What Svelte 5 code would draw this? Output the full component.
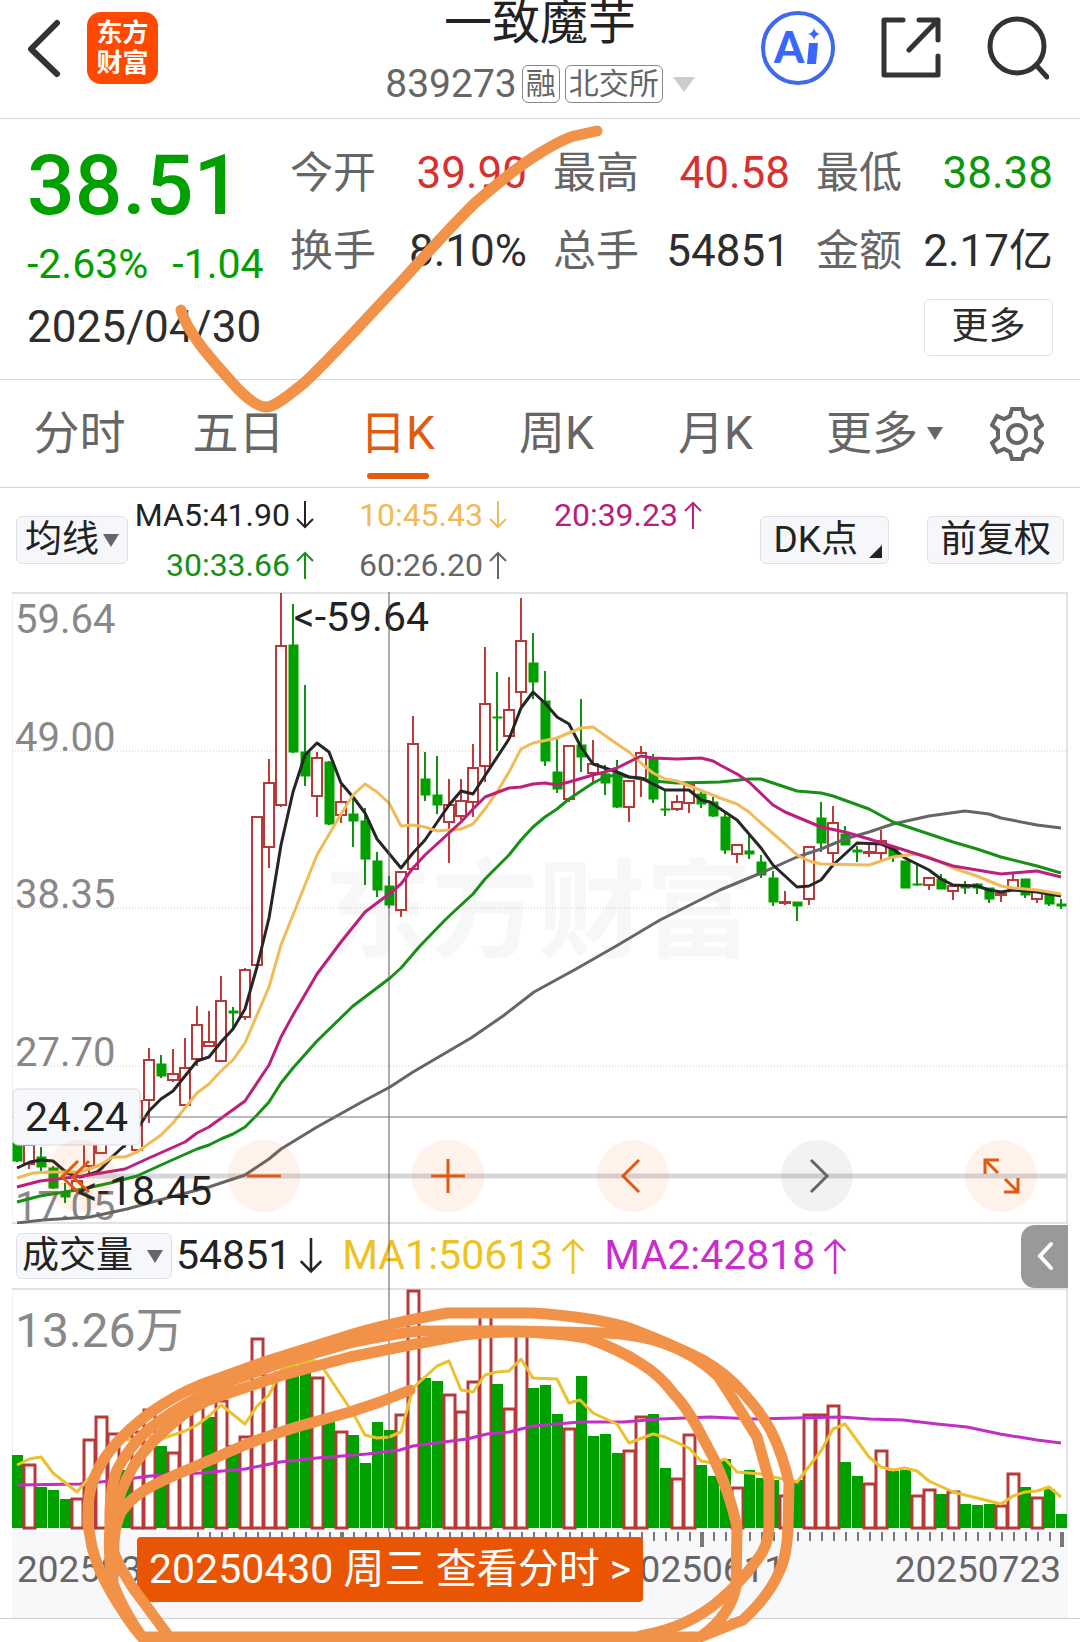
<script>
  // [rising, high, bodyTop, bodyBottom, low] in plot units
  const candles = [
    [0, 1135, 1143, 1161, 1162], [1, 1144, 1145, 1164, 1169], [0, 1147, 1157, 1167, 1171], [0, 1166, 1168, 1188, 1189],
    [0, 1183, 1192, 1197, 1203], [1, 1181, 1181, 1191, 1193], [1, 1130, 1140, 1166, 1173], [1, 1130, 1135, 1153, 1153],
    [1, 1120, 1125, 1140, 1142], [0, 1120, 1125, 1143, 1148], [1, 1100, 1101, 1150, 1150], [1, 1048, 1060, 1100, 1123],
    [0, 1055, 1064, 1076, 1078], [1, 1049, 1074, 1080, 1082], [1, 1038, 1068, 1105, 1105], [1, 1006, 1025, 1059, 1066],
    [1, 1011, 1042, 1046, 1046], [1, 976, 1001, 1061, 1061], [0, 1007, 1011, 1013, 1028], [1, 968, 970, 1017, 1020],
    [1, 817, 817, 965, 965], [1, 759, 783, 847, 868], [1, 593, 646, 805, 807], [0, 604, 645, 752, 753],
    [0, 685, 752, 776, 786], [1, 752, 758, 796, 817], [0, 761, 762, 824, 825], [1, 785, 802, 815, 823],
    [0, 798, 814, 821, 847], [0, 808, 821, 859, 885], [0, 852, 861, 890, 897], [0, 876, 886, 905, 908],
    [1, 872, 872, 910, 917], [1, 716, 744, 869, 869], [0, 752, 779, 795, 801], [0, 756, 795, 805, 814],
    [1, 779, 805, 822, 863], [1, 779, 801, 816, 820], [1, 744, 768, 802, 817], [1, 647, 704, 766, 782],
    [0, 672, 717, 718, 751], [1, 677, 710, 736, 736], [1, 598, 641, 692, 706], [0, 633, 663, 682, 699],
    [0, 671, 701, 761, 766], [0, 737, 772, 789, 793], [1, 746, 746, 799, 802], [0, 699, 745, 757, 772],
    [1, 740, 764, 773, 782], [0, 765, 774, 783, 795], [0, 760, 773, 807, 808], [1, 781, 781, 807, 822],
    [1, 746, 753, 778, 797], [0, 754, 758, 799, 803], [0, 790, 809, 810, 816], [1, 795, 802, 809, 811],
    [1, 784, 785, 803, 813], [0, 790, 794, 804, 808], [0, 797, 802, 816, 817], [0, 812, 817, 850, 854],
    [1, 845, 845, 854, 863], [0, 835, 851, 854, 859], [0, 855, 862, 875, 878], [0, 871, 878, 902, 906],
    [1, 891, 902, 903, 905], [0, 902, 902, 906, 921], [1, 847, 847, 899, 905], [0, 802, 818, 843, 852],
    [1, 806, 823, 853, 863], [0, 826, 834, 845, 845], [0, 846, 850, 852, 862], [1, 842, 852, 853, 857],
    [1, 830, 841, 853, 860], [0, 847, 849, 857, 862], [0, 861, 861, 888, 888], [0, 865, 884, 885, 886],
    [1, 878, 878, 885, 890], [0, 874, 879, 889, 889], [1, 886, 886, 891, 900], [0, 881, 885, 888, 894],
    [0, 883, 884, 888, 894], [0, 888, 888, 899, 903], [1, 894, 894, 895, 902], [1, 873, 880, 888, 888],
    [0, 879, 879, 895, 898], [1, 892, 892, 899, 903], [0, 895, 895, 904, 906], [0, 899, 904, 906, 909]
  ];

  // Bar tops; a negative value is a falling day
  const volumes = [
    -1455, 1464, -1487, -1490, -1499, 1498, 1439, 1416, 1433, -1470, 1431, 1409, -1446, 1452, 1410, 1403, -1417, 1400,
    -1445, 1436, 1338, 1375, 1372, -1366, -1364, 1377, -1422, 1431, -1435, -1463, -1422, -1430, 1414, 1290, -1378, -1381,
    1394, 1411, 1381, 1313, -1384, 1408, 1330, -1388, -1385, -1414, 1428, -1376, -1436, -1434, -1453, 1450, 1416, -1414,
    -1468, 1478, 1434, -1465, -1476, -1459, 1487, -1470, -1478, -1480, 1495, -1480, 1414, 1414, 1405, -1462, -1476, 1483,
    1450, -1471, -1470, 1495, 1489, -1494, 1491, -1504, -1505, -1504, 1505, 1473, -1487, 1497, -1489, -1514
  ];

  const averages = [
    { name: 'ma60', points: '17,1223 43,1220 90,1217 127,1209 167,1198 209,1187 245,1175 269,1159 281,1149 317,1127 360,1103 390,1087 413,1072 471,1038 503,1016 534,992 576,969 618,945 660,920 720,890 761,873 797,857 821,849 845,839 869,832 893,824 929,816 965,811 989,814 1001,818 1037,825 1061,828' },
    { name: 'ma30', points: '17,1202 40,1196 83,1189 110,1183 137,1176 161,1165 197,1149 209,1145 221,1139 233,1134 245,1127 257,1115 269,1102 281,1083 293,1068 317,1041 353,1006 365,997 390,978 401,968 419,947 445,920 461,905 473,894 485,879 509,855 521,840 533,827 545,817 557,809 569,799 593,783 605,777 617,775 629,777 653,781 677,783 720,782 749,779 761,779 773,783 797,791 821,793 833,796 869,809 893,822 917,830 953,842 977,849 1001,857 1037,866 1061,873' },
    { name: 'ma5', points: '17,1168 30,1162 41,1160 53,1161 67,1173 80,1177 97,1172 102,1168 113,1156 125,1145 142,1122 149,1111 161,1099 173,1091 197,1061 209,1057 221,1042 233,1029 245,1009 257,967 269,918 281,845 293,792 305,755 317,743 329,752 341,783 353,797 365,813 377,839 401,868 413,853 425,840 449,805 461,791 473,794 509,739 521,708 533,692 545,703 557,717 569,724 581,747 593,764 617,772 629,777 641,778 665,790 689,790 701,800 710,802 737,820 761,848 773,865 797,887 809,886 821,880 833,865 857,843 881,844 893,849 905,858 929,870 941,879 953,885 977,886 989,890 1001,892 1013,890 1037,892 1061,896' },
    { name: 'ma10', points: '17,1178 33,1173 53,1172 80,1172 100,1165 113,1157 125,1157 137,1152 161,1135 173,1123 197,1093 209,1084 221,1071 233,1060 245,1043 269,987 281,945 291,920 317,855 341,814 353,795 365,784 377,792 389,803 401,826 413,825 425,827 437,831 461,829 473,824 485,809 497,792 509,772 521,749 533,743 557,738 581,728 593,727 617,744 629,752 641,763 653,773 665,779 677,781 720,798 737,804 749,812 761,823 785,844 797,855 809,861 821,864 869,865 893,857 917,854 929,857 953,868 977,876 1001,886 1013,888 1037,890 1061,894' },
    { name: 'ma20', points: '17,1187 40,1181 83,1176 125,1169 149,1158 185,1142 197,1133 209,1127 245,1101 269,1065 281,1037 293,1015 317,974 341,942 365,912 377,903 389,894 401,884 413,868 425,855 461,822 473,809 485,797 509,788 521,787 533,784 545,783 557,785 569,782 593,775 605,772 617,768 641,756 653,758 677,759 701,758 713,761 720,765 737,774 749,782 773,805 785,812 809,822 821,827 845,832 869,839 917,854 953,866 989,872 1001,874 1037,871 1061,877' }
  ];

  const volumeAverages = [
    { name: 'vol2', points: '17,1485 80,1484 120,1480 150,1476 200,1473 245,1469 280,1462 317,1458 367,1454 400,1450 413,1446 467,1439 487,1434 509,1432 533,1426 580,1422 623,1422 660,1419 710,1417 753,1419 840,1417 870,1419 903,1420 937,1424 967,1427 1000,1434 1037,1440 1061,1443' },
    { name: 'vol1', points: '17,1465 29,1459 41,1457 53,1473 77,1492 89,1478 113,1443 125,1440 137,1439 149,1436 161,1439 185,1431 197,1425 209,1416 221,1405 245,1424 257,1406 269,1395 281,1370 293,1365 313,1360 323,1368 353,1413 365,1435 377,1438 389,1437 401,1432 413,1388 437,1366 449,1361 461,1390 473,1392 485,1375 497,1372 509,1371 521,1359 533,1378 557,1379 569,1403 580,1400 593,1413 617,1424 629,1443 653,1434 665,1437 689,1448 701,1461 713,1463 725,1459 737,1472 761,1474 773,1477 797,1482 821,1451 833,1429 845,1424 869,1457 881,1467 893,1470 905,1468 917,1471 929,1481 953,1492 977,1498 1001,1504 1013,1496 1025,1492 1037,1491 1049,1487 1061,1497' }
  ];

  const stats = [
    ['今开', '39.90', 'up'], ['最高', '40.58', 'up'], ['最低', '38.38', 'down'],
    ['换手', '8.10%', ''], ['总手', '54851', ''], ['金额', '2.17亿', '']
  ];
  const legend = [
    ['MA5:41.90', 'down', 'c5'], ['10:45.43', 'down', 'c10'], ['20:39.23', 'up', 'c20'],
    ['30:33.66', 'up', 'c30'], ['60:26.20', 'up', 'c60']
  ];
  const tabs = ['分时', '五日', '日K', '周K', '月K'];
  const priceLabels = [['59.64', 633], ['49.00', 751], ['38.35', 908], ['27.70', 1066], ['17.05', 1220]];
  const tools = [
    { label: '向前翻页', d: 'M34 21 18 37l16 15M45 21 29 37l16 15' },
    { label: '缩小', d: 'M19 36h34' },
    { label: '放大', d: 'M19 36h34M36 19v34' },
    { label: '左移', d: 'M42 20 26 36l16 16' },
    { label: '右移', d: 'M30 20l16 16-16 16', off: true },
    { label: '全屏', d: 'M20 34V20h14M20 20l13 13M53 38v14H39M53 52 40 39' }
  ];
  const at = (i) => 17 + 12 * i;
  const ticks = candles.map((_, i) => i).filter((i) => i > 14);
  let active = $state('日K');
</script>

{#snippet arrow(dir)}
  <svg class="arrow" viewBox="0 0 18 28" aria-hidden="true">
    <path d={dir === 'up' ? 'M9 28V2M1 10l8-8 8 8' : 'M9 0v26M1 18l8 8 8-8'} />
  </svg>
{/snippet}

{#snippet caret()}
  <svg width="16" height="13" viewBox="0 0 16 13" aria-hidden="true"><path d="M0 0h16L8 13z" fill="#666" /></svg>
{/snippet}

<div class="page">
  <header>
    <div class="side">
      <button class="icon" aria-label="返回">
        <svg width="36" height="60" viewBox="0 0 36 60"><path d="M31 5 5 31l26 25" fill="none" stroke="#333" stroke-width="6" stroke-linecap="round" stroke-linejoin="round" /></svg>
      </button>
      <div class="logo"><span>东方</span><span>财富</span></div>
    </div>
    <div class="name">
      <h1>一致魔芋</h1>
      <div class="code">
        <span>839273</span><span class="tag">融</span><span class="tag">北交所</span>
        <svg width="22" height="15" viewBox="0 0 22 15" aria-hidden="true"><path d="M0 0h22L11 15z" fill="#ccc" /></svg>
      </div>
    </div>
    <div class="side right">
      <button class="icon" aria-label="Ai">
        <svg width="74" height="76" viewBox="0 0 74 76">
          <circle cx="37" cy="38" r="35" fill="none" stroke="#3f69ec" stroke-width="4" />
          <text class="ai" x="13" y="53">A</text>
          <path d="M48 33h9l-2 21h-9z" fill="#3a66ff" />
          <path d="M53 18q1 5 6 6-5 1-6 6-1-5-6-6 5-1 6-6z" fill="#3a66ff" />
        </svg>
      </button>
      <button class="icon" aria-label="分享">
        <svg width="60" height="62" viewBox="0 0 60 62" fill="none" stroke="#333" stroke-width="5" stroke-linecap="round" stroke-linejoin="round"><path d="M22 3H3v55h54V39M38 3h19v20M57 3 28 33" /></svg>
      </button>
      <button class="icon" aria-label="搜索">
        <svg width="62" height="64" viewBox="0 0 62 64" fill="none" stroke="#333" stroke-width="5" stroke-linecap="round"><circle cx="30" cy="30" r="27" /><path d="m49 49 11 12" /></svg>
      </button>
    </div>
  </header>

  <section class="quote">
    <div class="top">
      <div class="price">
        <strong>38.51</strong>
        <div class="change"><span>-2.63%</span><span>-1.04</span></div>
      </div>
      <dl>
        {#each stats as [label, value, tone]}
          <div><dt>{label}</dt><dd class={tone}>{value}</dd></div>
        {/each}
      </dl>
    </div>
    <div class="bottom">
      <time datetime="2025-04-30">2025/04/30</time>
      <button class="more">更多</button>
    </div>
  </section>

  <nav>
    {#each tabs as tab}
      <button class:active={active === tab} onclick={() => (active = tab)}>{tab}</button>
    {/each}
    <button class="wide">更多{@render caret()}</button>
    <button aria-label="设置">
      <svg width="54" height="56" viewBox="-27 -28 54 56" fill="none" stroke="#666" stroke-width="4">
        <path d="M-5-25H5L7-18 13-15 20-18 25-9 19-4V4L25 9 20 18 13 15 7 18 5 25H-5L-7 18-13 15-20 18-25 9-19 4V-4L-25-9-20-18-13-15-7-18z" />
        <circle r="9" />
      </svg>
    </button>
  </nav>

  <div class="averages">
    <button class="chip ma">均线{@render caret()}</button>
    <div class="legend">
      {#each legend as [text, dir, tone]}
        <span class={tone}>{text}{@render arrow(dir)}</span>
      {/each}
    </div>
    <button class="chip dk">DK点<svg width="13" height="13" viewBox="0 0 13 13" aria-hidden="true"><path d="M13 0v13H0z" fill="#222" /></svg></button>
    <button class="chip">前复权</button>
  </div>

  <div class="charts">
    <div class="kline">
      <svg class="plot" viewBox="12 592 1056 632" role="img" aria-label="日K线图">
        <text class="watermark" x="324" y="949">东方财富</text>
        <path class="grid" d="M12 751H1066M12 908H1066M12 1066H1066" />
        <path class="frame" d="M12 593H1067V1223H12" /><path class="frame thin" d="M12 593V1223" />
        {#each priceLabels as [text, y]}<text class="scale" x="15" {y}>{text}</text>{/each}
        <path d="M60 1176H1067" stroke="#d5d7dd" stroke-width="5" />
        {#each candles as [rising, high, top, bottom, low], i}
          <g class={rising ? 'rise' : 'fall'}>
            {#if rising}
              <path d="M{at(i)} {high}V{top}M{at(i)} {bottom}V{low}" />
              <rect x={at(i) - 5} y={top} width="10" height={bottom - top} />
            {:else}
              <path d="M{at(i)} {high}V{low}" />
              <rect class="solid" x={at(i) - 4} y={top} width="9" height={bottom - top} />
            {/if}
          </g>
        {/each}
        {#each averages as line}<polyline class={line.name} points={line.points} />{/each}
        <text class="mark" x="429" y="631" text-anchor="end">&lt;-59.64</text>
        <text class="mark" x="212" y="1205" text-anchor="end">&lt;-18.45</text>
        <path d="M12 1117H1067" stroke="#777" stroke-width="1" />
        <rect x="13" y="1089" width="127" height="56" rx="5" fill="#f7f8fb" stroke="#d8dae0" />
        <text class="mark" x="25" y="1131">24.24</text>
      </svg>
      <div class="tools">
        {#each tools as tool}
          <button class:off={tool.off} aria-label={tool.label}>
            <svg viewBox="0 0 72 72"><path d={tool.d} /></svg>
          </button>
        {/each}
      </div>
    </div>

    <div class="volume-head">
      <button class="chip">成交量{@render caret()}</button>
      <span>54851{@render arrow('down')}</span>
      <span class="v1">MA1:50613{@render arrow('up')}</span>
      <span class="v2">MA2:42818{@render arrow('up')}</span>
      <button class="drawer" aria-label="展开"><svg width="20" height="32" viewBox="0 0 20 32"><path d="M16 4 5 16l11 12" fill="none" stroke="#fff" stroke-width="4" stroke-linecap="round" /></svg></button>
    </div>

    <svg class="plot" viewBox="12 1288 1056 244" role="img" aria-label="成交量图">
      <path class="frame" d="M12 1289H1067V1529" /><path class="frame thin" d="M12 1289V1529H1067" />
      <text class="total" x="15" y="1347">13.26万</text>
      {#each volumes as v, i}
        {#if v > 0}
          <rect class="hollow" x={at(i) - 5} y={v + 1} width="11" height={1527 - v} />
        {:else}
          <rect class="solid" x={at(i) - 5} y={-v} width="11" height={1528 + v} />
        {/if}
      {/each}
      {#each volumeAverages as line}<polyline class={line.name} points={line.points} />{/each}
    </svg>
    <div class="cross"></div>
  </div>

  <div class="axis">
    <svg class="plot" viewBox="12 1532 1056 86" role="img" aria-label="日期轴">
      {#each ticks as i}
        <path d="M{at(i) + 1} 1532v{i % 30 === 27 ? 15 : 9}" stroke="#777" stroke-width={i % 30 === 27 ? 4 : 2} />
      {/each}
      <text x="17" y="1582">20250318</text>
      <text x="702" y="1582" text-anchor="middle">20250611</text>
      <text x="1061" y="1582" text-anchor="end">20250723</text>
    </svg>
    <button class="popup">20250430 周三 查看分时 &gt;</button>
  </div>

  <svg class="ink" viewBox="0 0 1080 1642" aria-hidden="true">
    <path d="M181 310C187 332 208 356 238 389Q256 407 266 407C276 407 292 392 303 384C335 354 360 325 400 283C430 250 455 222 475 203Q515 168 540 153Q563 139 574 136L597 131" />
    <path d="M410 1390L380 1402L350 1412L300 1426Q260 1438 233 1450T187 1470Q160 1481 145 1490T121 1512Q113 1530 114 1553Q120 1568 133 1588L167 1634" />
    <path d="M142 1637Q132 1627 112 1594Q97 1568 92 1547L88 1525Q87 1495 93 1482Q98 1465 113 1447Q127 1430 150 1413Q175 1395 200 1385L267 1361L350 1335Q390 1323 447 1313H533Q590 1317 623 1326Q650 1335 693 1355Q715 1365 735 1384Q760 1410 771 1431Q783 1455 789 1483L788 1527Q787 1555 780 1570Q770 1595 743 1620L700 1637H142" />
    <path d="M142 1637Q120 1605 112 1580Q108 1555 110 1527Q109 1490 117 1470Q133 1440 157 1423Q180 1405 233 1380L283 1362L350 1343Q390 1334 420 1331H513L607 1333Q640 1335 663 1343Q695 1354 718 1376Q735 1402 757 1437L769 1480V1527Q768 1547 757 1560Q740 1583 720 1600Q688 1628 640 1636" />
    <path d="M113 1580Q109 1550 114 1520Q119 1490 133 1467Q145 1447 173 1423Q195 1404 217 1397L283 1375L350 1357L400 1347L463 1335Q520 1328 587 1338Q620 1350 640 1363Q660 1375 673 1393Q685 1405 697 1427L713 1457Q729 1490 737 1527L736 1587Q730 1615 703 1635" />
  </svg>
</div>

<style>
  :global(body) { background: #fff; }
  .page { position: relative; overflow: hidden; padding-bottom: 23px; color: #2d2d2d; font-family: Roboto, 'Noto Sans CJK SC', sans-serif; line-height: 1.2; }
  button { margin: 0; padding: 0; border: 0; background: none; color: inherit; font: inherit; cursor: pointer; }
  svg { display: block; flex: none; }
  h1, dl, dd { margin: 0; font-weight: 400; }

  header { display: grid; grid-template-columns: 1fr auto 1fr; height: 118px; border-bottom: 1px solid #d5d5d5; }
  .side { display: flex; align-items: center; height: 96px; padding-left: 26px; gap: 25px; }
  .right { justify-content: flex-end; padding: 0 31px 0 0; gap: 46px; }
  .logo { display: flex; flex-direction: column; align-items: center; justify-content: center; width: 71px; height: 72px; border-radius: 14px; background: #ff4800; color: #fff; font-size: 26px; line-height: 30px; font-weight: 700; }
  .ai { font: 900 43px Lato, Roboto, sans-serif; fill: #3a66ff; }
  .name { display: flex; flex-direction: column; align-items: center; }
  h1 { font-size: 48px; line-height: 46px; color: #222; }
  .code { display: flex; align-items: center; gap: 5px; margin-top: 19px; color: #666; font-size: 39px; line-height: 38px; }
  .code svg { margin-left: 5px; }
  .tag { border: 1px solid #888; border-radius: 6px; padding: 0 3px; font-size: 30px; line-height: 36px; }

  .quote { padding: 15px 27px 23px; border-bottom: 1px solid #d5d5d5; }
  .top { display: flex; justify-content: space-between; }
  .price { padding-top: 10px; color: #00a000; }
  .price strong { display: block; font-size: 84px; line-height: 84px; font-weight: 500; }
  .change { display: flex; gap: 24px; margin-top: 13px; font-size: 41px; line-height: 46px; white-space: nowrap; }
  dl { display: grid; grid-template-columns: repeat(3, 237px); grid-auto-rows: 78px; column-gap: 26px; font-size: 44px; line-height: 78px; }
  dl div { display: flex; align-items: baseline; justify-content: space-between; white-space: nowrap; }
  dt { color: #666; font-size: 43px; }
  .up { color: #d92f2f; }
  .down { color: #0d970d; }
  .bottom { display: flex; align-items: center; justify-content: space-between; margin-top: 9px; font-size: 44px; }
  .more { width: 129px; height: 57px; border: 1px solid #e2e2e2; border-radius: 6px; font-size: 37px; }

  nav { display: grid; grid-template-columns: repeat(6, 159fr) 126fr; height: 107px; border-bottom: 1px solid #d5d5d5; color: #666; font-size: 46px; }
  nav button { position: relative; display: flex; align-items: center; justify-content: center; gap: 9px; }
  .wide { padding-left: 20px; }
  .active { color: #e05a10; }
  .active::after { content: ''; position: absolute; bottom: 8px; width: 62px; height: 6px; border-radius: 3px; background: #e05a10; }

  .averages { display: flex; align-items: center; height: 104px; padding: 0 16px; }
  .chip { display: flex; align-items: center; gap: 6px; height: 48px; padding: 0 12px; border: 1px solid #dfe1e6; border-radius: 6px; background: #f6f7fa; color: #222; font-size: 37px; white-space: nowrap; }
  .ma { gap: 4px; padding: 0 8px; }
  .legend { display: grid; grid-template-columns: 176px 144px 146px; column-gap: 49px; flex: 1; margin-left: 10px; font-size: 32px; line-height: 50px; }
  .legend span { display: flex; align-items: center; justify-content: flex-end; gap: 6px; white-space: nowrap; }
  .arrow { width: 18px; height: 28px; fill: none; stroke: currentColor; stroke-width: 2; }
  .c5 { color: #222; } .c10 { color: #f0bb55; } .c20 { color: #b8207a; } .c30 { color: #159015; } .c60 { color: #666; }
  .dk { gap: 11px; padding: 0 6px 0 13px; margin-right: 38px; }
  .dk svg { align-self: flex-end; margin-bottom: 5px; }

  .charts { position: relative; margin: 0 12px; }
  .plot { width: 100%; height: auto; }
  .kline { display: grid; }
  .kline > * { grid-area: 1 / 1; min-width: 0; }
  .frame { fill: none; stroke: #e2e2e2; stroke-width: 2; }
  .thin { stroke-width: 1; }
  .grid { stroke: #ccc; stroke-dasharray: 1 2; }
  .watermark { font-size: 107px; font-weight: 700; fill: #f7f7f7; }
  .scale { font-size: 40px; fill: #888; }
  .mark { font-size: 41px; fill: #222; }
  .total { font-size: 48px; fill: #888; }
  .rise { stroke: #c03a38; stroke-width: 2; }
  .rise rect, .hollow { fill: #fff; stroke: #b83a38; stroke-width: 2; }
  .hollow { stroke-width: 3; }
  .fall { stroke: #109010; stroke-width: 2; }
  .solid { fill: #00a000; stroke: none; }
  .fall .solid { stroke: #00a000; stroke-width: 1; }
  polyline { fill: none; stroke-width: 3; stroke-linejoin: round; }
  .ma5 { stroke: #262626; } .ma10 { stroke: #f0bc58; } .ma20 { stroke: #bd1f7c; } .ma30 { stroke: #169016; } .ma60 { stroke: #666; }
  .vol1 { stroke: #ebc22d; } .vol2 { stroke: #c22fc4; }
  .tools { display: flex; justify-content: space-between; align-self: end; padding: 0 31px 12px 32px; }
  .tools button { width: 72px; height: 72px; border-radius: 50%; background: rgba(255, 90, 0, 0.08); }
  .tools path { fill: none; stroke: #e0590f; stroke-width: 3; }
  .tools .off { background: rgba(0, 0, 0, 0.05); }
  .tools .off path { stroke: #666; }

  .volume-head { display: flex; align-items: center; height: 64px; padding-left: 4px; font-size: 41px; color: #222; }
  .volume-head .chip { gap: 14px; height: 46px; padding: 0 8px 0 5px; margin-right: 4px; }
  .volume-head span { display: flex; align-items: center; gap: 8px; margin-right: 19px; white-space: nowrap; }
  .volume-head .arrow { width: 24px; height: 36px; }
  .volume-head .v1 { color: #edc222; } .volume-head .v2 { color: #cb2bcf; }
  .drawer { display: flex; align-items: center; justify-content: center; width: 47px; height: 63px; margin-left: auto; border-radius: 14px 0 0 14px; background: #999; }
  .cross { position: absolute; top: 0; bottom: -5px; left: 35.6%; width: 2px; background: rgba(90, 90, 90, 0.5); }

  .axis { position: relative; padding: 0 12px; border-bottom: 1px solid #d0d0d0; }
  .axis .plot { background: #f8f8fb; }
  .axis text { font-size: 37px; fill: #666; }
  .popup { position: absolute; top: 5px; left: 137px; height: 65px; padding: 0 12px; border-radius: 4px; background: #ea5504; color: #fff; font-size: 41px; white-space: nowrap; }
  .ink { position: absolute; top: 0; left: 0; width: 100%; height: auto; pointer-events: none; fill: none; stroke: #f29249; stroke-width: 11; stroke-linecap: round; stroke-linejoin: round; }
</style>
